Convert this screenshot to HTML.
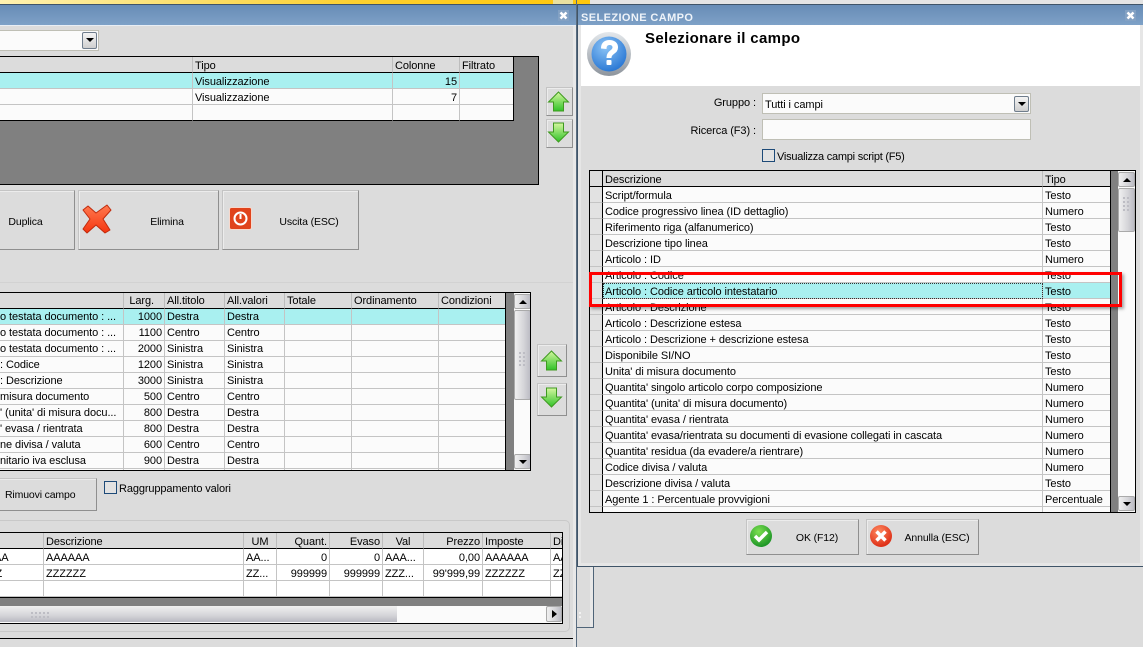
<!DOCTYPE html>
<html><head><meta charset="utf-8"><style>
html,body{margin:0;padding:0}
body{width:1143px;height:647px;overflow:hidden;position:relative;background:#dcdcdc;font:11px "Liberation Sans",sans-serif;color:#000;letter-spacing:-.08px}
div,svg,table{position:absolute}
.s{position:absolute;white-space:nowrap;line-height:16px}
.title{background:linear-gradient(#678cb6,#7ea1c7)}
.btn{box-sizing:border-box;background:#dcdcdc;border:1px solid;border-color:#c4c4c4 #8f8f8f #8f8f8f #c4c4c4;box-shadow:inset 1px 1px 0 #ececec}
.lab{text-align:center;line-height:16px;font-size:10.5px;letter-spacing:-.12px}
.g{border:1px solid #000;box-sizing:border-box;overflow:hidden;background:#808080}
table{border-collapse:separate;border-spacing:0;table-layout:fixed;left:0;top:0}
td,th{box-sizing:border-box;height:16px;padding:3px 2px 0;font-weight:normal;text-align:left;white-space:nowrap;overflow:hidden;border-right:1px solid #c4c4c4;border-bottom:1px solid #c4c4c4;background:#fbfbfb;line-height:12px;font-size:11px}
th{background:#dcdcdc;border-bottom:1px solid #000;border-right:1px solid #bdbdbd}
th.h{background:#e2e2e2;border-bottom:1px solid #c4c4c4;border-right:1px solid #000}
.t2 td,.t2 th{padding-top:2px;line-height:13px}
.w td{background:#fff}
.c td{background:#a9f0f0}
.r{text-align:right}
.in{box-sizing:border-box;background:#fbfbfb;border:1px solid #bfbfb5}
.dd{box-sizing:border-box;border:1px solid #6f7d8c;border-radius:2px;background:linear-gradient(#f4f4f4,#cfcfcf)}
.dd:after{content:"";position:absolute;left:3px;top:5px;border:4px solid transparent;border-top:4px solid #000;border-bottom:0}
.cb{box-sizing:border-box;border:1px solid #1d4a78;background:#e2e2e2;width:13px;height:13px}
.sb{background:linear-gradient(90deg,#f0f0f0,#d4d4d8 60%,#bcbcc4);border:1px solid #aaa;box-sizing:border-box;border-radius:2px}
.sbt{background:#fbfbfb}
.up:after,.dn:after{content:"";position:absolute;left:4px;top:5px;border:4px solid transparent}
.up:after{border-bottom:4px solid #000;border-top:0}
.dn:after{border-top:4px solid #000;border-bottom:0}
</style></head><body>

<!-- top strip -->
<div style="left:0;top:0;width:590px;height:4px;background:linear-gradient(90deg,#fff2b0,#fbe070 30%,#fdd030 60%,#ffc70a)"></div>
<div style="left:553px;top:0;width:20px;height:4px;background:#e8e0a0"></div>
<div style="left:590px;top:0;width:553px;height:4px;background:#e4e4e4"></div>
<div style="left:0;top:4px;width:1143px;height:1px;background:#3f5468"></div>

<!-- Back window -->
<div class="title" style="left:0;top:5px;width:576px;height:20px"></div>
<div style="left:0;top:25px;width:576px;height:1px;background:#e8eef5"></div>
<div style="left:573px;top:26px;width:3px;height:621px;background:#e8e8e8"></div>
<div style="left:576px;top:0;width:1px;height:647px;background:#5a6d80"></div>

<!-- combo -->
<div class="in" style="left:-2px;top:30px;width:101px;height:21px"></div>
<div class="dd" style="left:82px;top:32px;width:15px;height:17px"></div>

<!-- Table 1 -->
<div class="g" style="left:-1px;top:56px;width:540px;height:129px">
<table style="width:514px;height:64px">
<col style="width:193px"><col style="width:200px"><col style="width:67px"><col style="width:54px">
<tr><th></th><th>Tipo</th><th>Colonne</th><th>Filtrato</th></tr>
<tr class="c"><td></td><td>Visualizzazione</td><td class="r">15</td><td></td></tr>
<tr><td></td><td>Visualizzazione</td><td class="r">7</td><td></td></tr>
<tr><td style="border-bottom:1px solid #000"></td><td style="border-bottom:1px solid #000"></td><td style="border-bottom:1px solid #000"></td><td style="border-bottom:1px solid #000"></td></tr>
</table>
<div style="left:513px;top:0;width:1px;height:64px;background:#000"></div>
</div>

<div class="btn" style="left:546px;top:87px;width:27px;height:29px"></div>
<div class="btn" style="left:546px;top:119px;width:27px;height:29px"></div>

<!-- buttons -->
<div class="btn" style="left:-3px;top:190px;width:78px;height:60px"></div>
<div class="lab s" style="left:0;top:214px;width:51px">Duplica</div>
<div class="btn" style="left:78px;top:190px;width:141px;height:60px"></div>
<div class="lab s" style="left:137px;top:214px;width:60px">Elimina</div>
<div class="btn" style="left:222px;top:190px;width:137px;height:60px"></div>
<div class="lab s" style="left:269px;top:214px;width:80px">Uscita (ESC)</div>

<div style="left:0;top:282px;width:573px;height:1px;background:#d2d2d2"></div>

<!-- Table 2 -->
<div class="g" style="left:-1px;top:292px;width:532px;height:179px">
<table class="t2" style="width:506px">
<col style="width:124px"><col style="width:41px"><col style="width:60px"><col style="width:60px"><col style="width:67px"><col style="width:87px"><col style="width:67px">
<tr><th></th><th class="r" style="padding-right:10px">Larg.</th><th>All.titolo</th><th>All.valori</th><th>Totale</th><th>Ordinamento</th><th>Condizioni</th></tr>
<tr class="c"><td style="padding-left:0">o testata documento : ...</td><td class="r">1000</td><td>Destra</td><td>Destra</td><td></td><td></td><td></td></tr>
<tr><td style="padding-left:0">o testata documento : ...</td><td class="r">1100</td><td>Centro</td><td>Centro</td><td></td><td></td><td></td></tr>
<tr><td style="padding-left:0">o testata documento : ...</td><td class="r">2000</td><td>Sinistra</td><td>Sinistra</td><td></td><td></td><td></td></tr>
<tr><td style="padding-left:0">: Codice</td><td class="r">1200</td><td>Sinistra</td><td>Sinistra</td><td></td><td></td><td></td></tr>
<tr><td style="padding-left:0">: Descrizione</td><td class="r">3000</td><td>Sinistra</td><td>Sinistra</td><td></td><td></td><td></td></tr>
<tr><td style="padding-left:0">misura documento</td><td class="r">500</td><td>Centro</td><td>Centro</td><td></td><td></td><td></td></tr>
<tr><td style="padding-left:0">' (unita' di misura docu...</td><td class="r">800</td><td>Destra</td><td>Destra</td><td></td><td></td><td></td></tr>
<tr><td style="padding-left:0">' evasa / rientrata</td><td class="r">800</td><td>Destra</td><td>Destra</td><td></td><td></td><td></td></tr>
<tr><td style="padding-left:0">ne divisa / valuta</td><td class="r">600</td><td>Centro</td><td>Centro</td><td></td><td></td><td></td></tr>
<tr><td style="padding-left:0">nitario iva esclusa</td><td class="r">900</td><td>Destra</td><td>Destra</td><td></td><td></td><td></td></tr>
<tr><td></td><td></td><td></td><td></td><td></td><td></td><td></td></tr>
</table>
<div style="left:505px;top:0;width:1px;height:177px;background:#000"></div>
<div class="sbt" style="left:514px;top:0;width:17px;height:177px"></div>
<div class="sb up" style="left:514px;top:1px;width:17px;height:15px"></div>
<div class="sb" style="left:514px;top:17px;width:17px;height:90px"></div>
<div class="sb dn" style="left:514px;top:161px;width:17px;height:15px"></div>
</div>
<div class="btn" style="left:537px;top:344px;width:30px;height:33px"></div>
<div class="btn" style="left:537px;top:383px;width:30px;height:33px"></div>

<div class="btn" style="left:-3px;top:478px;width:100px;height:33px"></div>
<div class="s" style="left:5px;top:487px;font-size:10.5px;letter-spacing:-.15px">Rimuovi campo</div>
<div class="cb" style="left:104px;top:481px"></div>
<div class="s" style="left:119px;top:481px;letter-spacing:-.12px">Raggruppamento valori</div>

<!-- Table 3 -->
<div style="left:-5px;top:520px;width:573px;height:110px;border:1px solid #c9c9c9;border-radius:5px"></div>
<div class="g" style="left:-1px;top:532px;width:564px;height:92px">
<table style="width:563px">
<col style="width:44px"><col style="width:200px"><col style="width:33px"><col style="width:53px"><col style="width:53px"><col style="width:41px"><col style="width:59px"><col style="width:68px"><col style="width:12px">
<tr><th></th><th>Descrizione</th><th style="text-align:center">UM</th><th class="r">Quant.</th><th class="r">Evaso</th><th style="text-align:center">Val</th><th class="r">Prezzo</th><th>Imposte</th><th>Di</th></tr>
<tr class="w"><td style="padding-left:0;text-indent:-6px">AA</td><td>AAAAAA</td><td>AA...</td><td class="r">0</td><td class="r">0</td><td>AAA...</td><td class="r">0,00</td><td>AAAAAA</td><td>AA</td></tr>
<tr class="w"><td style="padding-left:0;text-indent:-4.500px">Z</td><td>ZZZZZZ</td><td>ZZ...</td><td class="r">999999</td><td class="r">999999</td><td>ZZZ...</td><td class="r">99'999,99</td><td>ZZZZZZ</td><td>ZZ</td></tr>
<tr class="w"><td></td><td></td><td></td><td></td><td></td><td></td><td></td><td></td><td></td></tr>
</table>
<div style="left:0;top:64px;width:564px;height:1px;background:#000"></div>
<div class="sbt" style="left:0;top:73px;width:563px;height:17px"></div>
<div style="left:0;top:73px;width:397px;height:16px;background:linear-gradient(#f0f0f0,#d4d4d8 60%,#b8b8c0)"></div>
<div class="sb" style="left:546px;top:73px;width:16px;height:16px"></div>
<div style="left:552px;top:77px;border:4px solid transparent;border-left:5px solid #000;border-right:0"></div>
</div>
<div style="left:0;top:638px;width:573px;height:1px;background:#000"></div>

<!-- strip between windows -->
<div style="left:577px;top:566px;width:16px;height:61px;background:#dcdcdc"></div>
<div style="left:590px;top:566px;width:3px;height:61px;background:#e8e8e8"></div>
<div style="left:593px;top:566px;width:1px;height:62px;background:#4f6478"></div>
<div style="left:577px;top:627px;width:17px;height:1px;background:#4f6478"></div>
<div style="left:579px;top:612px;width:2px;height:2px;background:#f2f2f2"></div>
<div style="left:579px;top:616px;width:2px;height:2px;background:#f2f2f2"></div>

<!-- Dialog -->
<div style="left:577px;top:5px;width:566px;height:562px;background:#e6e6e6;box-sizing:border-box;border:1px solid #3f5468;border-top:0;border-right:0"></div>
<div class="title" style="left:578px;top:5px;width:565px;height:20px"></div>
<div class="s" style="left:581px;top:10px;color:#eef3f9;font-weight:bold;font-size:11px;letter-spacing:.4px">SELEZIONE CAMPO</div>
<div style="left:581px;top:25px;width:559px;height:61px;background:#fff"></div>
<div style="left:581px;top:86px;width:559px;height:477px;background:#dcdcdc"></div>
<div class="s" style="left:645px;top:31px;font-weight:bold;font-size:15px;letter-spacing:.35px">Selezionare il campo</div>

<svg style="left:586px;top:31px" width="46" height="46" viewBox="0 0 46 46">
<defs><radialGradient id="q" cx=".4" cy=".3" r=".8"><stop offset="0" stop-color="#8cc4f6"/><stop offset="1" stop-color="#1f6fd0"/></radialGradient>
<linearGradient id="qr" x1="0" y1="0" x2="0" y2="1"><stop offset="0" stop-color="#e4e8ec"/><stop offset="1" stop-color="#8d949c"/></linearGradient></defs>
<circle cx="23" cy="23" r="22" fill="url(#qr)"/><circle cx="23" cy="23" r="17.500" fill="url(#q)"/>
<path d="M15.500 17c0-5 3.500-7.500 8-7.500s8 2.500 8 7c0 6-6.500 5.500-6.500 10h-4c0-6.500 6-6.500 6-10 0-1.800-1.500-3-3.500-3s-3.500 1.300-3.500 4z" fill="#fff" stroke="#fff"/>
<rect x="20.500" y="29" width="5" height="5" rx="1" fill="#fff"/></svg>

<div class="s" style="left:680px;top:95px;width:76px;text-align:right">Gruppo :</div>
<div class="in" style="left:762px;top:93px;width:269px;height:21px"></div>
<div class="s" style="left:765px;top:97px">Tutti i campi</div>
<div class="dd" style="left:1014px;top:96px;width:15px;height:16px"></div>
<div class="s" style="left:680px;top:123px;width:76px;text-align:right">Ricerca (F3) :</div>
<div class="in" style="left:762px;top:119px;width:269px;height:21px"></div>
<div class="cb" style="left:762px;top:149px"></div>
<div class="s" style="left:777px;top:149px;letter-spacing:-.24px">Visualizza campi script (F5)</div>

<div class="g" style="left:589px;top:170px;width:547px;height:343px">
<table style="width:521px">
<col style="width:13px"><col style="width:440px"><col style="width:68px">
<tr><th style="border-right:1px solid #000"></th><th>Descrizione</th><th>Tipo</th></tr>
<tr><th class="h"></th><td>Script/formula</td><td>Testo</td></tr>
<tr><th class="h"></th><td>Codice progressivo linea (ID dettaglio)</td><td>Numero</td></tr>
<tr><th class="h"></th><td>Riferimento riga (alfanumerico)</td><td>Testo</td></tr>
<tr><th class="h"></th><td>Descrizione tipo linea</td><td>Testo</td></tr>
<tr><th class="h"></th><td>Articolo : ID</td><td>Numero</td></tr>
<tr><th class="h"></th><td>Articolo : Codice</td><td>Testo</td></tr>
<tr class="c"><th class="h"></th><td style="outline:1px dotted #333;outline-offset:-1px">Articolo : Codice articolo intestatario</td><td>Testo</td></tr>
<tr><th class="h"></th><td>Articolo : Descrizione</td><td>Testo</td></tr>
<tr><th class="h"></th><td>Articolo : Descrizione estesa</td><td>Testo</td></tr>
<tr><th class="h"></th><td>Articolo : Descrizione + descrizione estesa</td><td>Testo</td></tr>
<tr><th class="h"></th><td>Disponibile SI/NO</td><td>Testo</td></tr>
<tr><th class="h"></th><td>Unita' di misura documento</td><td>Testo</td></tr>
<tr><th class="h"></th><td>Quantita' singolo articolo corpo composizione</td><td>Numero</td></tr>
<tr><th class="h"></th><td>Quantita' (unita' di misura documento)</td><td>Numero</td></tr>
<tr><th class="h"></th><td>Quantita' evasa / rientrata</td><td>Numero</td></tr>
<tr><th class="h"></th><td>Quantita' evasa/rientrata su documenti di evasione collegati in cascata</td><td>Numero</td></tr>
<tr><th class="h"></th><td>Quantita' residua (da evadere/a rientrare)</td><td>Numero</td></tr>
<tr><th class="h"></th><td>Codice divisa / valuta</td><td>Numero</td></tr>
<tr><th class="h"></th><td>Descrizione divisa / valuta</td><td>Testo</td></tr>
<tr><th class="h"></th><td>Agente 1 : Percentuale provvigioni</td><td>Percentuale</td></tr>
<tr><th class="h"></th><td></td><td></td></tr>
</table>
<div style="left:520px;top:0;width:1px;height:341px;background:#000"></div>
<div class="sbt" style="left:528px;top:0;width:18px;height:341px"></div>
<div class="sb up" style="left:528px;top:1px;width:17px;height:15px"></div>
<div class="sb" style="left:528px;top:17px;width:17px;height:44px"></div>
<div class="sb dn" style="left:528px;top:325px;width:17px;height:15px"></div>
</div>

<!-- red rectangle -->
<div style="left:589px;top:272px;width:533px;height:35px;box-sizing:border-box;border:3px solid #f00;box-shadow:2px 2px 3px rgba(0,0,0,.35)"></div>

<div class="btn" style="left:746px;top:519px;width:113px;height:36px"></div>
<div class="lab s" style="left:787px;top:530px;width:60px">OK (F12)</div>
<div class="btn" style="left:866px;top:519px;width:113px;height:36px"></div>
<div class="lab s" style="left:897px;top:530px;width:80px">Annulla (ESC)</div>

<!-- icons -->
<svg style="left:0;top:0" width="1143" height="647" viewBox="0 0 1143 647">
<defs>
<linearGradient id="ga" x1="0" y1="0" x2="0" y2="1"><stop offset="0" stop-color="#d6f7a0"/><stop offset="1" stop-color="#30c228"/></linearGradient>
<linearGradient id="gb" x1="0" y1="0" x2="0" y2="1"><stop offset="0" stop-color="#ff7a50"/><stop offset="1" stop-color="#f5350f"/></linearGradient>
<radialGradient id="gc" cx=".4" cy=".3" r=".8"><stop offset="0" stop-color="#7ce050"/><stop offset="1" stop-color="#0f8a20"/></radialGradient>
<radialGradient id="gd" cx=".4" cy=".3" r=".8"><stop offset="0" stop-color="#ff8a60"/><stop offset="1" stop-color="#d81f0a"/></radialGradient>
</defs>
<rect x="558" y="10" width="11" height="11" fill="#83a1c3"/>
<path d="M560.500 12.500l6 6m0-6l-6 6" stroke="#fff" stroke-width="2.500" fill="none"/>
<rect x="1125" y="10" width="11" height="11" fill="#83a1c3"/>
<path d="M1127.500 12.500l6 6m0-6l-6 6" stroke="#fff" stroke-width="2.500" fill="none"/>
<g fill="url(#ga)" stroke="#3f9a20">
<path d="M558.500 92l10 10h-5v9h-10v-9h-5z"/>
<path d="M553.500 123h10v9h5l-10 10-10-10h5z"/>
<path d="M551.500 351l10 10h-5v9h-10v-9h-5z"/>
<path d="M546.500 388h10v9h5l-10 10-10-10h5z"/>
</g>
<path d="M88 206l8 7 11-8 4 5-8 9 7 11-5 3-9-8-9 8-4-4 7-10-7-9z" fill="url(#gb)" stroke="#c02a0c" stroke-linejoin="round"/>
<rect x="229.500" y="207.500" width="22" height="22" rx="2" fill="#e0431c" stroke="#f7d8cc"/>
<circle cx="240.500" cy="218.500" r="6" fill="none" stroke="#fff" stroke-width="2"/>
<path d="M240.500 214v5" stroke="#fff" stroke-width="2"/>
<circle cx="761" cy="536" r="11" fill="url(#gc)"/>
<path d="M755 536l4 4 8-8" fill="none" stroke="#fff" stroke-width="3.500"/>
<circle cx="881" cy="536" r="11" fill="url(#gd)"/>
<path d="M876.500 531.500l9 9m0-9l-9 9" fill="none" stroke="#fff" stroke-width="3.500"/>
<g fill="#bdbdc4">
<path d="M1123 197h2v2h-2zm4 0h2v2h-2zm-4 4h2v2h-2zm4 0h2v2h-2zm-4 4h2v2h-2zm4 0h2v2h-2zm-4 4h2v2h-2zm4 0h2v2h-2z"/>
<path d="M519 352h2v2h-2zm4 0h2v2h-2zm-4 4h2v2h-2zm4 0h2v2h-2zm-4 4h2v2h-2zm4 0h2v2h-2zm-4 4h2v2h-2zm4 0h2v2h-2z"/>
<path d="M31 612h2v2h-2zm4 0h2v2h-2zm4 0h2v2h-2zm4 0h2v2h-2zm4 0h2v2h-2zm-16 4h2v2h-2zm4 0h2v2h-2zm4 0h2v2h-2zm4 0h2v2h-2zm4 0h2v2h-2z"/>
</g>
</svg>
</body></html>
